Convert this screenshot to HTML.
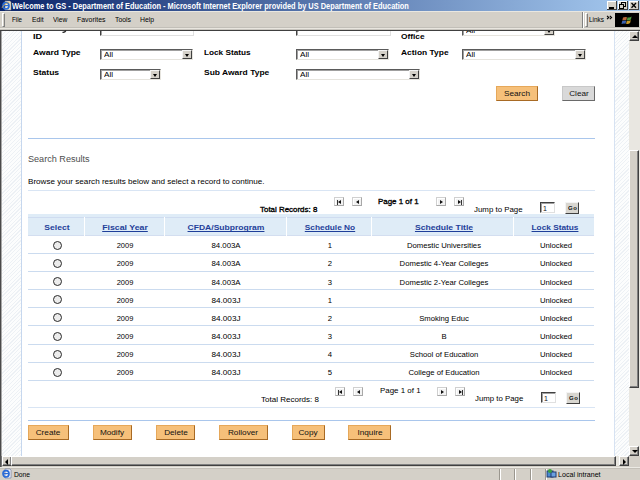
<!DOCTYPE html>
<html><head><meta charset="utf-8">
<style>
*{box-sizing:border-box;margin:0;padding:0}
html,body{width:640px;height:480px;overflow:hidden;background:#fff;font-family:"Liberation Sans",sans-serif;position:relative}
.a{position:absolute;white-space:nowrap}
.t{transform-origin:0 0}
.hatch{background-color:#fff;background-image:repeating-linear-gradient(135deg,#edf1f5 0 0.9px,#fcfdfd 0.9px 2.6px)}
.tb{top:1px;width:10px;height:9px;background:#d4d0c8;border:1px solid;border-color:#fff #404040 #404040 #fff}
.sel{height:11px;background:#fff;border:1px solid;border-color:#5a5a5a #e6e4de #e6e4de #5a5a5a;box-shadow:inset 1px 1px 0 #a0a0a0;overflow:hidden}
.sel i{position:absolute;left:2.5px;top:1px;font-style:normal;font-size:7.8px;line-height:8.5px;transform:scaleX(1.05);transform-origin:0 0;color:#000}
.sel b{position:absolute;right:0;top:0;width:10px;height:9px;background:#d4d0c8;border:1px solid;border-color:#f4f4f4 #404040 #404040 #f4f4f4}
.sel b:after{content:"";position:absolute;left:2px;top:3px;border-left:2.5px solid transparent;border-right:2.5px solid transparent;border-top:3px solid #000}
.btn{height:15px;background:#f6c07a;border:1px solid;border-color:#e6a85a #a86a24 #a86a24 #e6a85a}
.hl{height:1px;background:#a9c6ec}
.hl2{height:1px;background:#d9e5f4}
.radio{width:9px;height:9px;border-radius:50%;border:1px solid #2a2a2a;background:#ececec}
.pg{width:10px;height:9px;background:#f2f2f2;border:1px solid;border-color:#d0d0d0 #a8a8a8 #a8a8a8 #d0d0d0;box-shadow:inset 1px 1px 0 #fff}
.pg:after{content:"";position:absolute;top:1.5px;border-top:2.5px solid transparent;border-bottom:2.5px solid transparent}
.pl:after{left:3px;border-right:3.5px solid #111}
.pr:after{left:3px;border-left:3.5px solid #111}
.pbar{position:absolute;top:1.5px;width:1px;height:5px;background:#333}
.inp{height:11px;background:#fff;border:1px solid;border-color:#404040 #e0e0e0 #e0e0e0 #404040;box-shadow:inset 1px 1px 0 #a0a0a0}
.go{height:12px;background:#d8d6d0;border:1px solid;border-color:#f4f4f4 #404040 #404040 #f4f4f4}
.sb{background:#d4d0c8;border:1px solid;border-color:#fff #404040 #404040 #fff;box-shadow:inset -1px -1px 0 #808080}
.track{background-color:#e9e7e1}
</style></head><body>
<div class="a inp" style="left:100px;top:24px;width:94px;height:12px"></div>
<div class="a inp" style="left:296px;top:24px;width:95px;height:12px"></div>
<div class="a sel" style="left:462px;top:25px;width:93px;height:11px"><i>All</i><b></b></div>
<!-- title bar -->
<div class="a" style="left:0;top:0;width:640px;height:11px;background:linear-gradient(to right,#0a246a 0%,#a6caf0 100%)"></div>
<svg class="a" style="left:1px;top:0px" width="11" height="11"><path d="M4 1H9L10 2V10H4Z" fill="#f1ecdc" stroke="#8a8070" stroke-width="0.6"/><ellipse cx="5" cy="5.8" rx="3" ry="3.2" fill="none" stroke="#2a6cd8" stroke-width="1.7"/><path d="M2.5 5.6H7.8" stroke="#2a6cd8" stroke-width="1.2"/><path d="M1 8Q3 3 8.5 2.5" fill="none" stroke="#e8b040" stroke-width="0.7"/></svg>
<svg class="a" style="left:607px;top:1px" width="32" height="9" shape-rendering="crispEdges">
<g><rect x="0" y="0" width="10" height="9" fill="#d4d0c8"/><path d="M0 0.5H9.5M0.5 0V8.5" stroke="#fff"/><path d="M0 8.5H10M9.5 0V9" stroke="#404040"/><rect x="2" y="6" width="5" height="1.5" fill="#000"/></g>
<g transform="translate(10.5,0)"><rect x="0" y="0" width="10" height="9" fill="#d4d0c8"/><path d="M0 0.5H9.5M0.5 0V8.5" stroke="#fff"/><path d="M0 8.5H10M9.5 0V9" stroke="#404040"/>
<path d="M3.5 4V1.5H7.5V5.5H6.5" fill="none" stroke="#000" stroke-width="1"/><rect x="3" y="1" width="5" height="1" fill="#000"/><rect x="1.5" y="3.5" width="4" height="4" fill="none" stroke="#000"/><rect x="1" y="3" width="5" height="1" fill="#000"/></g>
<g transform="translate(22,0)"><rect x="0" y="0" width="10" height="9" fill="#d4d0c8"/><path d="M0 0.5H9.5M0.5 0V8.5" stroke="#fff"/><path d="M0 8.5H10M9.5 0V9" stroke="#404040"/></g>
</svg>
<svg class="a" style="left:629px;top:1px" width="10" height="9"><path d="M2.5 2L7 6.8M7 2L2.5 6.8" stroke="#000" stroke-width="1.3"/></svg>
<!-- menu bar -->
<div class="a" style="left:0;top:11px;width:640px;height:19px;background:#d4d0c8;border-top:1px solid #e9e7e1"></div>
<div class="a" style="left:0;top:27px;width:640px;height:1px;background:#c2bfb8"></div>
<div class="a" style="left:0;top:28px;width:640px;height:1px;background:#e9e6df"></div>
<div class="a" style="left:0;top:29px;width:640px;height:1px;background:#c8c5be"></div>
<div class="a" style="left:0;top:30px;width:640px;height:1px;background:#404040"></div>
<div class="a" style="left:2px;top:13px;width:3px;height:14px;border:1px solid;border-color:#fff #808080 #808080 #fff"></div>
<div class="a" style="left:582px;top:12px;width:1px;height:16px;background:#808080"></div><div class="a" style="left:583px;top:12px;width:1px;height:16px;background:#fff"></div><div class="a" style="left:585px;top:13px;width:3px;height:14px;border:1px solid;border-color:#fff #808080 #808080 #fff"></div>
<svg class="a" style="left:606px;top:15px" width="7" height="6"><path d="M1 0.8L2.8 2.5L1 4.2M3.8 0.8L5.6 2.5L3.8 4.2" fill="none" stroke="#000" stroke-width="1.1"/></svg>
<div class="a" style="left:615px;top:13px;width:24px;height:14px;background:#000"></div>
<svg class="a" style="left:621px;top:14px" width="14" height="12">
<path d="M2 3.5Q4 2.5 6 3.2L5.3 6.2Q3.3 5.5 1.3 6.5Z" fill="#b8683a"/>
<path d="M6.6 3.3Q8.6 4 10.6 2.6L9.9 5.6Q7.9 7 5.9 6.3Z" fill="#4a9a3e"/>
<path d="M1.2 7Q3.2 6 5.2 6.7L4.5 9.7Q2.5 9 0.5 10Z" fill="#3a62b0"/>
<path d="M5.8 6.8Q7.8 7.5 9.8 6.1L9.1 9.1Q7.1 10.5 5.1 9.8Z" fill="#c89a28"/>
</svg>
<!-- content frame -->
<div class="a" style="left:0;top:31px;width:1px;height:425px;background:#4a4a4a"></div><div class="a" style="left:1px;top:31px;width:1px;height:425px;background:#a8a8a8"></div>
<div class="a hatch" style="left:2px;top:31px;width:19px;height:425px"></div>
<div class="a" style="left:21px;top:31px;width:1px;height:425px;background:#c6d7ee"></div>
<div class="a" style="left:614px;top:31px;width:1px;height:425px;background:#d6e2f2"></div>
<div class="a hatch" style="left:615px;top:31px;width:14px;height:425px"></div>

<!-- vertical scrollbar -->
<div class="a track" style="left:629px;top:31px;width:11px;height:425px"></div>
<div class="a sb" style="left:629px;top:31px;width:10px;height:10px"><div class="a" style="left:2px;top:3px;border-left:3px solid transparent;border-right:3px solid transparent;border-bottom:3px solid #000"></div></div>
<div class="a sb" style="left:629px;top:150px;width:10px;height:238px"></div>
<div class="a sb" style="left:629px;top:446px;width:10px;height:10px"><div class="a" style="left:2px;top:3px;border-left:3px solid transparent;border-right:3px solid transparent;border-top:3px solid #000"></div></div>

<!-- horizontal scrollbar -->
<div class="a" style="left:0;top:456px;width:640px;height:11px;background:#d4d0c8"></div>
<div class="a track" style="left:12px;top:456px;width:617px;height:10px"></div>
<div class="a" style="left:0;top:456px;width:2px;height:11px;background:linear-gradient(to right,#404040,#8a8a8a)"></div>
<div class="a sb" style="left:2px;top:456px;width:10px;height:10px"><div class="a" style="left:2px;top:2px;border-top:3px solid transparent;border-bottom:3px solid transparent;border-right:3px solid #000"></div></div>
<div class="a sb" style="left:11px;top:456px;width:605px;height:10px"></div>
<div class="a sb" style="left:619px;top:456px;width:10px;height:10px"><div class="a" style="left:3px;top:2px;border-top:3px solid transparent;border-bottom:3px solid transparent;border-left:3px solid #000"></div></div>
<!-- status bar -->
<div class="a" style="left:0;top:467px;width:640px;height:13px;background:#d4d0c8;border-top:1px solid #eceae4"></div>
<div class="a" style="left:0;top:468px;width:640px;height:1px;background:#c4c0b8"></div>
<svg class="a" style="left:1px;top:468px" width="11" height="11"><path d="M4 1H9L10 2V10H4Z" fill="#f4f4f8" stroke="#6070a0" stroke-width="0.6"/><ellipse cx="5" cy="5.8" rx="3" ry="3.2" fill="none" stroke="#2a6cd8" stroke-width="1.7"/><path d="M2.5 5.6H7.8" stroke="#2a6cd8" stroke-width="1.2"/></svg>
<div class="a" style="left:499px;top:469px;width:1px;height:11px;background:#9a968e"></div>
<div class="a" style="left:500px;top:469px;width:1px;height:11px;background:#fff"></div>
<div class="a" style="left:514px;top:469px;width:1px;height:11px;background:#9a968e"></div>
<div class="a" style="left:515px;top:469px;width:1px;height:11px;background:#fff"></div>
<div class="a" style="left:530px;top:469px;width:1px;height:11px;background:#9a968e"></div>
<div class="a" style="left:531px;top:469px;width:1px;height:11px;background:#fff"></div>
<div class="a" style="left:545px;top:469px;width:1px;height:11px;background:#9a968e"></div>
<div class="a" style="left:546px;top:469px;width:1px;height:11px;background:#fff"></div>
<svg class="a" style="left:546px;top:469px" width="11" height="10"><rect x="1" y="2" width="6" height="6" fill="#4a8ad0" stroke="#203a70"/><rect x="5" y="3" width="5" height="5" fill="#6aa0e0" stroke="#203a70"/><circle cx="4" cy="2" r="2" fill="#3aa040"/></svg>
<!-- form -->
<div class="a sel" style="left:100px;top:49px;width:93px"><i>All</i><b></b></div>
<div class="a sel" style="left:100px;top:69px;width:61px"><i>All</i><b></b></div>
<div class="a sel" style="left:296px;top:49px;width:93px"><i>All</i><b></b></div>
<div class="a sel" style="left:296px;top:69px;width:124px"><i>All</i><b></b></div>
<div class="a sel" style="left:462px;top:49px;width:124px"><i>All</i><b></b></div>
<!-- re-cover top (content clipped under menu) -->
<div class="a" style="left:22px;top:30px;width:592px;height:1px;background:#404040"></div>
<svg class="a" style="left:60px;top:30px" width="8" height="4"><path d="M6 0.5Q5 2.6 2.5 2.3" fill="none" stroke="#222" stroke-width="1.2"/></svg>
<svg class="a" style="left:414px;top:30px" width="7" height="4"><path d="M5 0.5Q4.2 2 1.8 1.8" fill="none" stroke="#444" stroke-width="1"/></svg>

<div class="a btn" style="left:496px;top:86px;width:42px"></div>
<div class="a" style="left:562px;top:86px;width:33px;height:15px;background:#d9d9d9;border:1px solid;border-color:#c8c8c8 #6a6a6a #6a6a6a #c8c8c8"></div>

<div class="a hl" style="left:28px;top:138px;width:567px"></div>
<div class="a hl2" style="left:28px;top:190px;width:567px"></div>

<!-- pagination top -->
<div class="a pg pl" style="left:334px;top:197px"><div class="pbar" style="left:2px"></div></div>
<div class="a pg pl" style="left:352px;top:197px"></div>
<div class="a pg pr" style="left:436px;top:197px"></div>
<div class="a pg pr" style="left:454px;top:197px"><div class="pbar" style="left:6px"></div></div>
<div class="a inp" style="left:540px;top:202px;width:15px;height:11px"><i class="a" style="left:2px;top:1.5px;font-style:normal;font-size:7px;line-height:7px;color:#111">1</i></div>
<div class="a go" style="left:565px;top:202px;width:14px"><i class="a" style="left:2px;top:2px;font-style:normal;font-weight:bold;font-size:6px;line-height:6px;letter-spacing:0.6px;color:#111">Go</i></div>

<!-- table header -->
<div class="a" style="left:28px;top:214px;width:566px;height:22px;background:#dfecf7"></div>
<div class="a" style="left:28px;top:217px;width:566px;height:1px;background:#cfdcf0"></div>
<div class="a" style="left:28px;top:235px;width:566px;height:1px;background:#d3def0"></div>
<div class="a" style="left:84px;top:217px;width:1px;height:19px;background:#fff"></div>
<div class="a" style="left:164px;top:217px;width:1px;height:19px;background:#fff"></div>
<div class="a" style="left:286px;top:217px;width:1px;height:19px;background:#fff"></div>
<div class="a" style="left:371px;top:217px;width:1px;height:19px;background:#fff"></div>
<div class="a" style="left:513px;top:217px;width:1px;height:19px;background:#fff"></div>
<div class="a" style="left:28px;top:253px;width:566px;height:1px;background:#cbdbef"></div>
<div class="a radio" style="left:53px;top:241px"></div>
<div class="a" style="left:28px;top:271px;width:566px;height:1px;background:#cbdbef"></div>
<div class="a radio" style="left:53px;top:259px"></div>
<div class="a" style="left:28px;top:289px;width:566px;height:1px;background:#cbdbef"></div>
<div class="a radio" style="left:53px;top:277px"></div>
<div class="a" style="left:28px;top:307px;width:566px;height:1px;background:#cbdbef"></div>
<div class="a radio" style="left:53px;top:295px"></div>
<div class="a" style="left:28px;top:325px;width:566px;height:1px;background:#cbdbef"></div>
<div class="a radio" style="left:53px;top:313px"></div>
<div class="a" style="left:28px;top:344px;width:566px;height:1px;background:#cbdbef"></div>
<div class="a radio" style="left:53px;top:332px"></div>
<div class="a" style="left:28px;top:362px;width:566px;height:1px;background:#cbdbef"></div>
<div class="a radio" style="left:53px;top:350px"></div>
<div class="a" style="left:28px;top:380px;width:566px;height:1px;background:#cbdbef"></div>
<div class="a radio" style="left:53px;top:368px"></div>
<!-- pagination bottom -->
<div class="a pg pl" style="left:335px;top:387px"><div class="pbar" style="left:2px"></div></div>
<div class="a pg pl" style="left:353px;top:387px"></div>
<div class="a pg pr" style="left:437px;top:387px"></div>
<div class="a pg pr" style="left:455px;top:387px"><div class="pbar" style="left:6px"></div></div>
<div class="a inp" style="left:541px;top:392px;width:15px;height:11px"><i class="a" style="left:2px;top:1.5px;font-style:normal;font-size:7px;line-height:7px;color:#111">1</i></div>
<div class="a go" style="left:566px;top:392px;width:14px"><i class="a" style="left:2px;top:2px;font-style:normal;font-weight:bold;font-size:6px;line-height:6px;letter-spacing:0.6px;color:#111">Go</i></div>
<div class="a hl2" style="left:28px;top:407px;width:567px"></div>
<div class="a hl" style="left:28px;top:420px;width:567px"></div>

<div class="a btn" style="left:28px;top:425px;width:41px"></div>
<div class="a btn" style="left:93px;top:425px;width:39px"></div>
<div class="a btn" style="left:156px;top:425px;width:39px"></div>
<div class="a btn" style="left:219px;top:425px;width:49px"></div>
<div class="a btn" style="left:292px;top:425px;width:33px"></div>
<div class="a btn" style="left:348px;top:425px;width:43px"></div>

<!-- text -->
<div class="a t" style="left:12.30px;top:1.99px;font-size:8.4px;line-height:8.4px;font-weight:bold;color:#fff;transform:scaleX(0.885);">Welcome to GS - Department of Education - Microsoft Internet Explorer provided by US Department of Education</div>
<div class="a t" style="left:11.80px;top:16.17px;font-size:7.6px;line-height:7.6px;font-weight:normal;color:#000;transform:scaleX(0.824);">File</div>
<div class="a t" style="left:31.80px;top:16.17px;font-size:7.6px;line-height:7.6px;font-weight:normal;color:#000;transform:scaleX(0.886);">Edit</div>
<div class="a t" style="left:52.80px;top:16.17px;font-size:7.6px;line-height:7.6px;font-weight:normal;color:#000;transform:scaleX(0.876);">View</div>
<div class="a t" style="left:76.60px;top:16.17px;font-size:7.6px;line-height:7.6px;font-weight:normal;color:#000;transform:scaleX(0.912);">Favorites</div>
<div class="a t" style="left:114.90px;top:16.17px;font-size:7.6px;line-height:7.6px;font-weight:normal;color:#000;transform:scaleX(0.902);">Tools</div>
<div class="a t" style="left:140.00px;top:16.17px;font-size:7.6px;line-height:7.6px;font-weight:normal;color:#000;transform:scaleX(0.902);">Help</div>
<div class="a t" style="left:589.00px;top:16.17px;font-size:7.6px;line-height:7.6px;font-weight:normal;color:#000;transform:scaleX(0.851);">Links</div>
<div class="a t" style="left:32.50px;top:32.93px;font-size:8px;line-height:8px;font-weight:bold;color:#000;transform:scaleX(1.137);">ID</div>
<div class="a t" style="left:400.80px;top:32.83px;font-size:8px;line-height:8px;font-weight:bold;color:#000;transform:scaleX(1.041);">Office</div>
<div class="a t" style="left:33.00px;top:48.53px;font-size:8px;line-height:8px;font-weight:bold;color:#000;transform:scaleX(1.067);">Award Type</div>
<div class="a t" style="left:33.00px;top:68.83px;font-size:8px;line-height:8px;font-weight:bold;color:#000;transform:scaleX(1.067);">Status</div>
<div class="a t" style="left:204.00px;top:48.53px;font-size:8px;line-height:8px;font-weight:bold;color:#000;transform:scaleX(1.028);">Lock Status</div>
<div class="a t" style="left:204.00px;top:68.63px;font-size:8px;line-height:8px;font-weight:bold;color:#000;transform:scaleX(1.059);">Sub Award Type</div>
<div class="a t" style="left:401.00px;top:48.53px;font-size:8px;line-height:8px;font-weight:bold;color:#000;transform:scaleX(1.053);">Action Type</div>
<div class="a t" style="left:28.00px;top:155.41px;font-size:9.2px;line-height:9.2px;font-weight:normal;color:#4d4d4d;transform:scaleX(0.989);">Search Results</div>
<div class="a t" style="left:28.00px;top:177.54px;font-size:7.4px;line-height:7.4px;font-weight:normal;color:#000;transform:scaleX(1.097);">Browse your search results below and select a record to continue.</div>
<div class="a t" style="left:260.30px;top:205.67px;font-size:7px;line-height:7px;font-weight:normal;color:#000;transform:scaleX(1.133);-webkit-text-stroke:0.3px #000;">Total Records: 8</div>
<div class="a t" style="left:378.00px;top:197.87px;font-size:7px;line-height:7px;font-weight:normal;color:#000;transform:scaleX(1.134);-webkit-text-stroke:0.3px #000;">Page 1 of 1</div>
<div class="a t" style="left:474.00px;top:205.77px;font-size:7px;line-height:7px;font-weight:normal;color:#000;transform:scaleX(1.125);">Jump to Page</div>
<div class="a t" style="left:261.00px;top:395.67px;font-size:7px;line-height:7px;font-weight:normal;color:#000;transform:scaleX(1.146);">Total Records: 8</div>
<div class="a t" style="left:379.80px;top:387.17px;font-size:7px;line-height:7px;font-weight:normal;color:#000;transform:scaleX(1.134);">Page 1 of 1</div>
<div class="a t" style="left:475.30px;top:395.27px;font-size:7px;line-height:7px;font-weight:normal;color:#000;transform:scaleX(1.118);">Jump to Page</div>
<div class="a t" style="left:-42.90px;width:200px;text-align:center;top:224.40px;font-size:7.8px;line-height:7.8px;font-weight:bold;color:#1f3f9a;transform-origin:50% 0;transform:scaleX(1.101);">Select</div>
<div class="a t" style="left:25.00px;width:200px;text-align:center;top:224.40px;font-size:7.8px;line-height:7.8px;font-weight:bold;color:#1f3f9a;transform-origin:50% 0;transform:scaleX(1.123);text-decoration:underline;">Fiscal Year</div>
<div class="a t" style="left:125.60px;width:200px;text-align:center;top:224.40px;font-size:7.8px;line-height:7.8px;font-weight:bold;color:#1f3f9a;transform-origin:50% 0;transform:scaleX(1.096);text-decoration:underline;">CFDA/Subprogram</div>
<div class="a t" style="left:229.90px;width:200px;text-align:center;top:224.40px;font-size:7.8px;line-height:7.8px;font-weight:bold;color:#1f3f9a;transform-origin:50% 0;transform:scaleX(1.067);text-decoration:underline;">Schedule No</div>
<div class="a t" style="left:343.70px;width:200px;text-align:center;top:224.40px;font-size:7.8px;line-height:7.8px;font-weight:bold;color:#1f3f9a;transform-origin:50% 0;transform:scaleX(1.102);text-decoration:underline;">Schedule Title</div>
<div class="a t" style="left:454.50px;width:200px;text-align:center;top:224.40px;font-size:7.8px;line-height:7.8px;font-weight:bold;color:#1f3f9a;transform-origin:50% 0;transform:scaleX(1.061);text-decoration:underline;">Lock Status</div>
<div class="a t" style="left:25.00px;width:200px;text-align:center;top:242.37px;font-size:7px;line-height:7px;font-weight:normal;color:#000;transform-origin:50% 0;transform:scaleX(1.066);">2009</div>
<div class="a t" style="left:125.75px;width:200px;text-align:center;top:242.37px;font-size:7px;line-height:7px;font-weight:normal;color:#000;transform-origin:50% 0;transform:scaleX(1.115);">84.003A</div>
<div class="a t" style="left:229.50px;width:200px;text-align:center;top:242.37px;font-size:7px;line-height:7px;font-weight:normal;color:#000;transform-origin:50% 0;transform:scaleX(1.100);">1</div>
<div class="a t" style="left:343.50px;width:200px;text-align:center;top:242.37px;font-size:7px;line-height:7px;font-weight:normal;color:#000;transform-origin:50% 0;transform:scaleX(1.100);">Domestic Universities</div>
<div class="a t" style="left:455.60px;width:200px;text-align:center;top:242.37px;font-size:7px;line-height:7px;font-weight:normal;color:#000;transform-origin:50% 0;transform:scaleX(1.103);">Unlocked</div>
<div class="a t" style="left:25.00px;width:200px;text-align:center;top:260.47px;font-size:7px;line-height:7px;font-weight:normal;color:#000;transform-origin:50% 0;transform:scaleX(1.066);">2009</div>
<div class="a t" style="left:125.75px;width:200px;text-align:center;top:260.47px;font-size:7px;line-height:7px;font-weight:normal;color:#000;transform-origin:50% 0;transform:scaleX(1.115);">84.003A</div>
<div class="a t" style="left:229.50px;width:200px;text-align:center;top:260.47px;font-size:7px;line-height:7px;font-weight:normal;color:#000;transform-origin:50% 0;transform:scaleX(1.100);">2</div>
<div class="a t" style="left:343.50px;width:200px;text-align:center;top:260.47px;font-size:7px;line-height:7px;font-weight:normal;color:#000;transform-origin:50% 0;transform:scaleX(1.100);">Domestic 4-Year Colleges</div>
<div class="a t" style="left:455.60px;width:200px;text-align:center;top:260.47px;font-size:7px;line-height:7px;font-weight:normal;color:#000;transform-origin:50% 0;transform:scaleX(1.103);">Unlocked</div>
<div class="a t" style="left:25.00px;width:200px;text-align:center;top:278.57px;font-size:7px;line-height:7px;font-weight:normal;color:#000;transform-origin:50% 0;transform:scaleX(1.066);">2009</div>
<div class="a t" style="left:125.75px;width:200px;text-align:center;top:278.57px;font-size:7px;line-height:7px;font-weight:normal;color:#000;transform-origin:50% 0;transform:scaleX(1.115);">84.003A</div>
<div class="a t" style="left:229.50px;width:200px;text-align:center;top:278.57px;font-size:7px;line-height:7px;font-weight:normal;color:#000;transform-origin:50% 0;transform:scaleX(1.100);">3</div>
<div class="a t" style="left:343.50px;width:200px;text-align:center;top:278.57px;font-size:7px;line-height:7px;font-weight:normal;color:#000;transform-origin:50% 0;transform:scaleX(1.100);">Domestic 2-Year Colleges</div>
<div class="a t" style="left:455.60px;width:200px;text-align:center;top:278.57px;font-size:7px;line-height:7px;font-weight:normal;color:#000;transform-origin:50% 0;transform:scaleX(1.103);">Unlocked</div>
<div class="a t" style="left:25.00px;width:200px;text-align:center;top:296.67px;font-size:7px;line-height:7px;font-weight:normal;color:#000;transform-origin:50% 0;transform:scaleX(1.066);">2009</div>
<div class="a t" style="left:125.75px;width:200px;text-align:center;top:296.67px;font-size:7px;line-height:7px;font-weight:normal;color:#000;transform-origin:50% 0;transform:scaleX(1.168);">84.003J</div>
<div class="a t" style="left:229.50px;width:200px;text-align:center;top:296.67px;font-size:7px;line-height:7px;font-weight:normal;color:#000;transform-origin:50% 0;transform:scaleX(1.100);">1</div>
<div class="a t" style="left:455.60px;width:200px;text-align:center;top:296.67px;font-size:7px;line-height:7px;font-weight:normal;color:#000;transform-origin:50% 0;transform:scaleX(1.103);">Unlocked</div>
<div class="a t" style="left:25.00px;width:200px;text-align:center;top:314.77px;font-size:7px;line-height:7px;font-weight:normal;color:#000;transform-origin:50% 0;transform:scaleX(1.066);">2009</div>
<div class="a t" style="left:125.75px;width:200px;text-align:center;top:314.77px;font-size:7px;line-height:7px;font-weight:normal;color:#000;transform-origin:50% 0;transform:scaleX(1.168);">84.003J</div>
<div class="a t" style="left:229.50px;width:200px;text-align:center;top:314.77px;font-size:7px;line-height:7px;font-weight:normal;color:#000;transform-origin:50% 0;transform:scaleX(1.100);">2</div>
<div class="a t" style="left:343.50px;width:200px;text-align:center;top:314.77px;font-size:7px;line-height:7px;font-weight:normal;color:#000;transform-origin:50% 0;transform:scaleX(1.100);">Smoking Educ</div>
<div class="a t" style="left:455.60px;width:200px;text-align:center;top:314.77px;font-size:7px;line-height:7px;font-weight:normal;color:#000;transform-origin:50% 0;transform:scaleX(1.103);">Unlocked</div>
<div class="a t" style="left:25.00px;width:200px;text-align:center;top:332.87px;font-size:7px;line-height:7px;font-weight:normal;color:#000;transform-origin:50% 0;transform:scaleX(1.066);">2009</div>
<div class="a t" style="left:125.75px;width:200px;text-align:center;top:332.87px;font-size:7px;line-height:7px;font-weight:normal;color:#000;transform-origin:50% 0;transform:scaleX(1.168);">84.003J</div>
<div class="a t" style="left:229.50px;width:200px;text-align:center;top:332.87px;font-size:7px;line-height:7px;font-weight:normal;color:#000;transform-origin:50% 0;transform:scaleX(1.100);">3</div>
<div class="a t" style="left:343.50px;width:200px;text-align:center;top:332.87px;font-size:7px;line-height:7px;font-weight:normal;color:#000;transform-origin:50% 0;transform:scaleX(1.100);">B</div>
<div class="a t" style="left:455.60px;width:200px;text-align:center;top:332.87px;font-size:7px;line-height:7px;font-weight:normal;color:#000;transform-origin:50% 0;transform:scaleX(1.103);">Unlocked</div>
<div class="a t" style="left:25.00px;width:200px;text-align:center;top:350.97px;font-size:7px;line-height:7px;font-weight:normal;color:#000;transform-origin:50% 0;transform:scaleX(1.066);">2009</div>
<div class="a t" style="left:125.75px;width:200px;text-align:center;top:350.97px;font-size:7px;line-height:7px;font-weight:normal;color:#000;transform-origin:50% 0;transform:scaleX(1.168);">84.003J</div>
<div class="a t" style="left:229.50px;width:200px;text-align:center;top:350.97px;font-size:7px;line-height:7px;font-weight:normal;color:#000;transform-origin:50% 0;transform:scaleX(1.100);">4</div>
<div class="a t" style="left:343.50px;width:200px;text-align:center;top:350.97px;font-size:7px;line-height:7px;font-weight:normal;color:#000;transform-origin:50% 0;transform:scaleX(1.100);">School of Education</div>
<div class="a t" style="left:455.60px;width:200px;text-align:center;top:350.97px;font-size:7px;line-height:7px;font-weight:normal;color:#000;transform-origin:50% 0;transform:scaleX(1.103);">Unlocked</div>
<div class="a t" style="left:25.00px;width:200px;text-align:center;top:369.07px;font-size:7px;line-height:7px;font-weight:normal;color:#000;transform-origin:50% 0;transform:scaleX(1.066);">2009</div>
<div class="a t" style="left:125.75px;width:200px;text-align:center;top:369.07px;font-size:7px;line-height:7px;font-weight:normal;color:#000;transform-origin:50% 0;transform:scaleX(1.168);">84.003J</div>
<div class="a t" style="left:229.50px;width:200px;text-align:center;top:369.07px;font-size:7px;line-height:7px;font-weight:normal;color:#000;transform-origin:50% 0;transform:scaleX(1.100);">5</div>
<div class="a t" style="left:343.50px;width:200px;text-align:center;top:369.07px;font-size:7px;line-height:7px;font-weight:normal;color:#000;transform-origin:50% 0;transform:scaleX(1.100);">College of Education</div>
<div class="a t" style="left:455.60px;width:200px;text-align:center;top:369.07px;font-size:7px;line-height:7px;font-weight:normal;color:#000;transform-origin:50% 0;transform:scaleX(1.103);">Unlocked</div>
<div class="a t" style="left:416.75px;width:200px;text-align:center;top:89.77px;font-size:7.6px;line-height:7.6px;font-weight:normal;color:#111;transform-origin:50% 0;transform:scaleX(1.080);">Search</div>
<div class="a t" style="left:478.50px;width:200px;text-align:center;top:89.77px;font-size:7.6px;line-height:7.6px;font-weight:normal;color:#111;transform-origin:50% 0;transform:scaleX(1.080);">Clear</div>
<div class="a t" style="left:-51.60px;width:200px;text-align:center;top:428.77px;font-size:7.6px;line-height:7.6px;font-weight:normal;color:#111;transform-origin:50% 0;transform:scaleX(1.080);">Create</div>
<div class="a t" style="left:12.35px;width:200px;text-align:center;top:428.77px;font-size:7.6px;line-height:7.6px;font-weight:normal;color:#111;transform-origin:50% 0;transform:scaleX(1.080);">Modify</div>
<div class="a t" style="left:75.50px;width:200px;text-align:center;top:428.77px;font-size:7.6px;line-height:7.6px;font-weight:normal;color:#111;transform-origin:50% 0;transform:scaleX(1.080);">Delete</div>
<div class="a t" style="left:143.28px;width:200px;text-align:center;top:428.77px;font-size:7.6px;line-height:7.6px;font-weight:normal;color:#111;transform-origin:50% 0;transform:scaleX(1.080);">Rollover</div>
<div class="a t" style="left:208.30px;width:200px;text-align:center;top:428.77px;font-size:7.6px;line-height:7.6px;font-weight:normal;color:#111;transform-origin:50% 0;transform:scaleX(1.080);">Copy</div>
<div class="a t" style="left:269.82px;width:200px;text-align:center;top:428.77px;font-size:7.6px;line-height:7.6px;font-weight:normal;color:#111;transform-origin:50% 0;transform:scaleX(1.080);">Inquire</div>
<div class="a t" style="left:14.00px;top:471.07px;font-size:7.6px;line-height:7.6px;font-weight:normal;color:#000;transform:scaleX(0.887);">Done</div>
<div class="a t" style="left:558.00px;top:471.07px;font-size:7.6px;line-height:7.6px;font-weight:normal;color:#000;transform:scaleX(0.934);">Local intranet</div>
</body></html>
